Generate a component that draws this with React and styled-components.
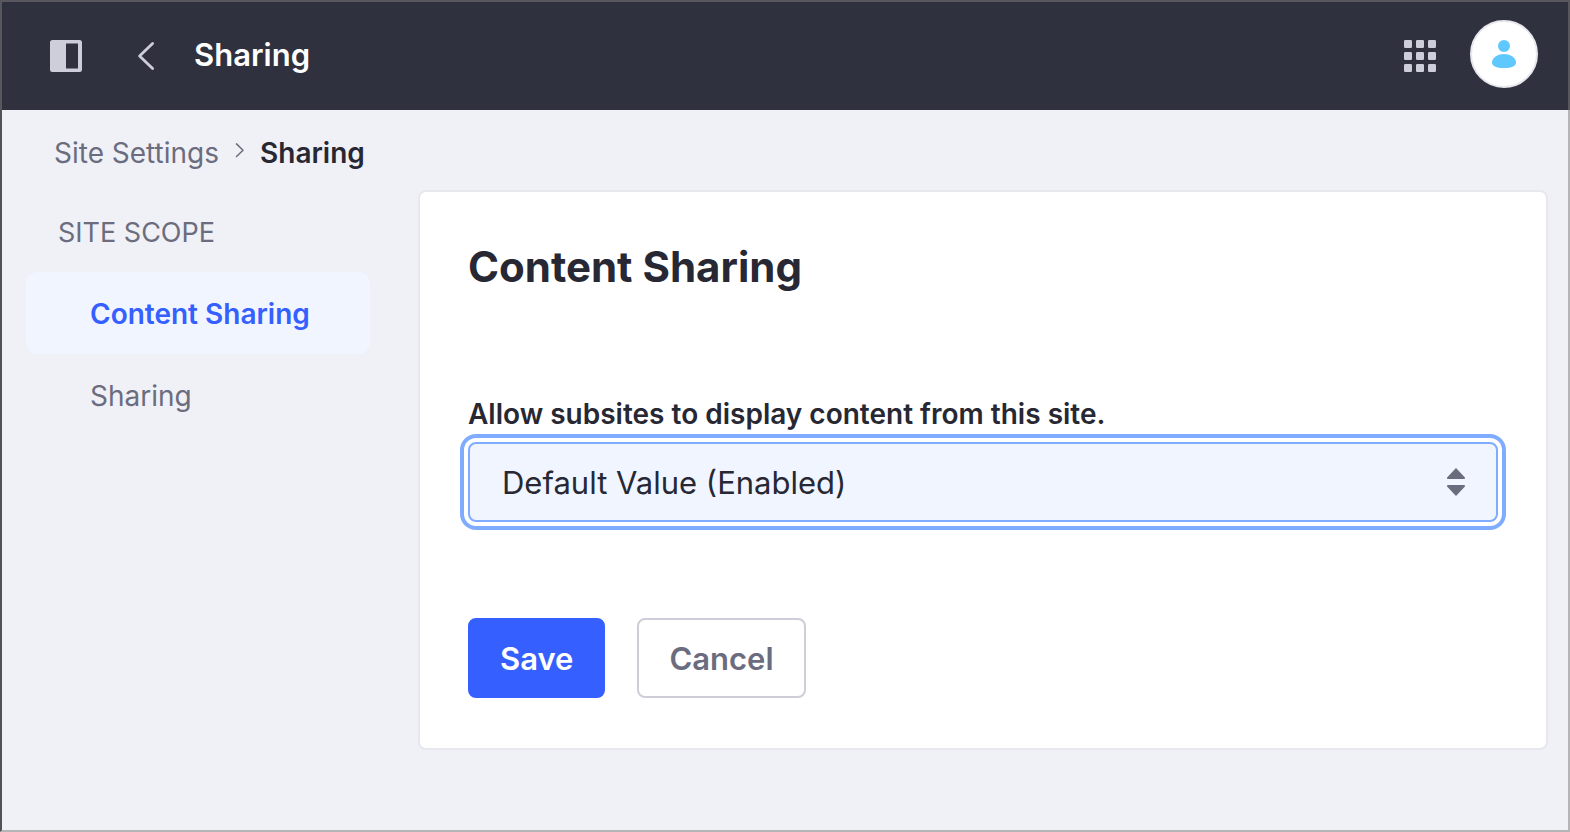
import React from "react";
import styled, { createGlobalStyle } from "styled-components";

const GlobalStyle = createGlobalStyle`
  *, *::before, *::after { box-sizing: border-box; }
  body {
    margin: 0;
    background: #f0f1f6;
    color: #272833;
    font-family: Inter, "Liberation Sans", sans-serif;
    font-size: 28px;
    line-height: 40px;
  }
  button, select { font: inherit; }
`;

const Page = styled.div`
  display: flex;
  flex-direction: column;
  min-height: 100vh;
`;

const Header = styled.header`
  display: flex;
  align-items: center;
  justify-content: space-between;
  height: 110px;
  padding: 0 30px 0 32px;
  background: #30313f;
  border: 2px solid #57575d;
  border-bottom: 0;
`;

const HeaderGroup = styled.div`
  display: flex;
  align-items: center;
`;

const IconButton = styled.button`
  display: flex;
  align-items: center;
  justify-content: center;
  width: 64px;
  height: 64px;
  padding: 0;
  border: 0;
  background: none;
  color: #cdced9;
  cursor: pointer;
`;

const BackLink = styled.a`
  display: flex;
  align-items: center;
  justify-content: center;
  width: 64px;
  height: 64px;
  margin: 0 16px;
  color: #cdced9;
`;

const HeaderTitle = styled.h1`
  margin: 0;
  padding-bottom: 2px;
  color: #fff;
  font-size: 31px;
  font-weight: 600;
`;

const Avatar = styled.button`
  display: flex;
  align-items: center;
  justify-content: center;
  width: 68px;
  height: 68px;
  margin: 0 0 4px 18px;
  padding: 0;
  border: 2px solid #e7e7ed;
  border-radius: 50%;
  background: #fff;
  color: #5fc8ff;
  cursor: pointer;
`;

const Body = styled.div`
  flex: 1;
  padding: 23px 20px 80px 24px;
  border: 2px solid #b5b5b8;
  border-top: 0;
  border-left-color: #515156;
`;

const Breadcrumb = styled.nav`
  display: flex;
  align-items: center;
  gap: 15px;
  padding-left: 28px;
`;

const CrumbLink = styled.a`
  color: #6b6c7e;
  text-decoration: none;
`;

const CrumbCurrent = styled.span`
  font-weight: 600;
`;

const Columns = styled.div`
  display: flex;
  align-items: flex-start;
  gap: 48px;
  padding-top: 17px;
`;

const Sidebar = styled.nav`
  flex: none;
  width: 344px;
  padding-top: 23px;
`;

const SidebarHeading = styled.h2`
  margin: 0 0 19px;
  padding-left: 32px;
  color: #6b6c7e;
  font-size: 27px;
  font-weight: 400;
  text-transform: uppercase;
`;

const SidebarLink = styled.a`
  display: block;
  padding: 22px 24px 20px 64px;
  border-radius: 12px;
  background: ${({ $active }) => ($active ? "#f0f5ff" : "transparent")};
  color: ${({ $active }) => ($active ? "#355fff" : "#6b6c7e")};
  font-weight: ${({ $active }) => ($active ? 600 : 400)};
  text-decoration: none;
`;

const Card = styled.form`
  flex: 1;
  min-width: 0;
  padding: 48px 48px 50px;
  border: 2px solid #e7e7ed;
  border-radius: 8px;
  background: #fff;
`;

const CardTitle = styled.h2`
  margin: 0 0 100px;
  font-size: 42px;
  font-weight: 700;
  line-height: 54px;
`;

const FieldLabel = styled.label`
  display: block;
  margin-bottom: 8px;
  font-weight: 600;
`;

const SelectWrap = styled.div`
  display: grid;
  align-items: center;
  margin-bottom: 96px;

  & > * { grid-area: 1 / 1; }
  & > svg {
    justify-self: end;
    margin-right: 32px;
    pointer-events: none;
  }
`;

const Select = styled.select`
  width: 100%;
  height: 80px;
  padding: 2px 72px 0 32px;
  border: 2px solid #80acff;
  border-radius: 8px;
  outline: 0;
  box-shadow: 0 0 0 4px #fff, 0 0 0 8px #80acff;
  appearance: none;
  background: #f0f5ff;
  color: #272833;
  font-size: 31px;
`;

const Actions = styled.div`
  display: flex;
  gap: 32px;
`;

const Button = styled.button`
  height: 80px;
  padding: 2px 30px 0;
  border: 2px solid ${({ $primary }) => ($primary ? "#355fff" : "#cdced9")};
  border-radius: 8px;
  background: ${({ $primary }) => ($primary ? "#355fff" : "#fff")};
  color: ${({ $primary }) => ($primary ? "#fff" : "#6b6c7e")};
  font-size: 31px;
  font-weight: 600;
  cursor: pointer;
`;

const PanelIcon = () => (
  <svg width="32" height="32" viewBox="0 0 32 32" fill="currentColor" aria-hidden="true">
    <path
      fillRule="evenodd"
      d="M2.500 0h27a2.500 2.500 0 0 1 2.500 2.500v27a2.500 2.500 0 0 1-2.500 2.500h-27A2.500 2.500 0 0 1 0 29.500v-27A2.500 2.500 0 0 1 2.500 0zM16 3.500v25h12v-25z"
    />
  </svg>
);

const BackIcon = () => (
  <svg width="32" height="32" viewBox="0 0 32 32" fill="none" stroke="currentColor" strokeWidth="2.8" strokeLinecap="round" strokeLinejoin="round" aria-hidden="true">
    <path d="M22.6 3.4 9.6 16l13 12.6" />
  </svg>
);

const CrumbIcon = () => (
  <svg width="11" height="20" viewBox="0 0 11 20" fill="none" stroke="#6b6c7e" strokeWidth="1.5" strokeLinecap="round" strokeLinejoin="round" aria-hidden="true">
    <path d="M2.5 .9 9 7.2l-6.500 6.300" />
  </svg>
);

const AppsIcon = () => (
  <svg width="32" height="32" viewBox="0 0 32 32" fill="currentColor" aria-hidden="true">
    {[0, 12, 24].map((y) =>
      [0, 12, 24].map((x) => <rect key={`${x}-${y}`} x={x} y={y} width="8" height="8" rx="1.2" />)
    )}
  </svg>
);

const UserIcon = () => (
  <svg width="28" height="28" viewBox="0 0 28 28" fill="currentColor" aria-hidden="true">
    <circle cx="14" cy="6" r="6" />
    <path d="M14 14C6.500 14 2 18.500 2 22.500 2 26 6 28 14 28s12-2 12-5.500C26 18.500 21.500 14 14 14z" />
  </svg>
);

const SortIcon = () => (
  <svg width="20" height="28" viewBox="0 0 20 28" fill="#6b6c7e" aria-hidden="true">
    <path d="M9.500 .6a.7.7 0 0 1 1 0L18.700 9.200c.6.700.3 1.800-.5 1.800H1.800C1 11 .7 9.900 1.300 9.200zM9.500 27.400a.7.7 0 0 0 1 0l8.200-8.600c.6-.7.3-1.800-.5-1.800H1.800c-.8 0-1.100 1.100-.5 1.800z" />
  </svg>
);

export default function App() {
  return (
    <Page>
      <GlobalStyle />
      <Header>
        <HeaderGroup>
          <IconButton type="button" aria-label="Toggle product menu">
            <PanelIcon />
          </IconButton>
          <BackLink href="#back" aria-label="Back">
            <BackIcon />
          </BackLink>
          <HeaderTitle>Sharing</HeaderTitle>
        </HeaderGroup>
        <HeaderGroup>
          <IconButton type="button" aria-label="Applications">
            <AppsIcon />
          </IconButton>
          <Avatar type="button" aria-label="User profile">
            <UserIcon />
          </Avatar>
        </HeaderGroup>
      </Header>
      <Body>
        <Breadcrumb aria-label="Breadcrumb">
          <CrumbLink href="#site-settings">Site Settings</CrumbLink>
          <CrumbIcon />
          <CrumbCurrent aria-current="page">Sharing</CrumbCurrent>
        </Breadcrumb>
        <Columns>
          <Sidebar aria-label="Site scope">
            <SidebarHeading>Site Scope</SidebarHeading>
            <SidebarLink href="#content-sharing" $active>Content Sharing</SidebarLink>
            <SidebarLink href="#sharing">Sharing</SidebarLink>
          </Sidebar>
          <Card>
            <CardTitle>Content Sharing</CardTitle>
            <FieldLabel htmlFor="subsites">Allow subsites to display content from this site.</FieldLabel>
            <SelectWrap>
              <Select id="subsites" defaultValue="default">
                <option value="default">Default Value (Enabled)</option>
              </Select>
              <SortIcon />
            </SelectWrap>
            <Actions>
              <Button type="submit" $primary>Save</Button>
              <Button type="button">Cancel</Button>
            </Actions>
          </Card>
        </Columns>
      </Body>
    </Page>
  );
}
